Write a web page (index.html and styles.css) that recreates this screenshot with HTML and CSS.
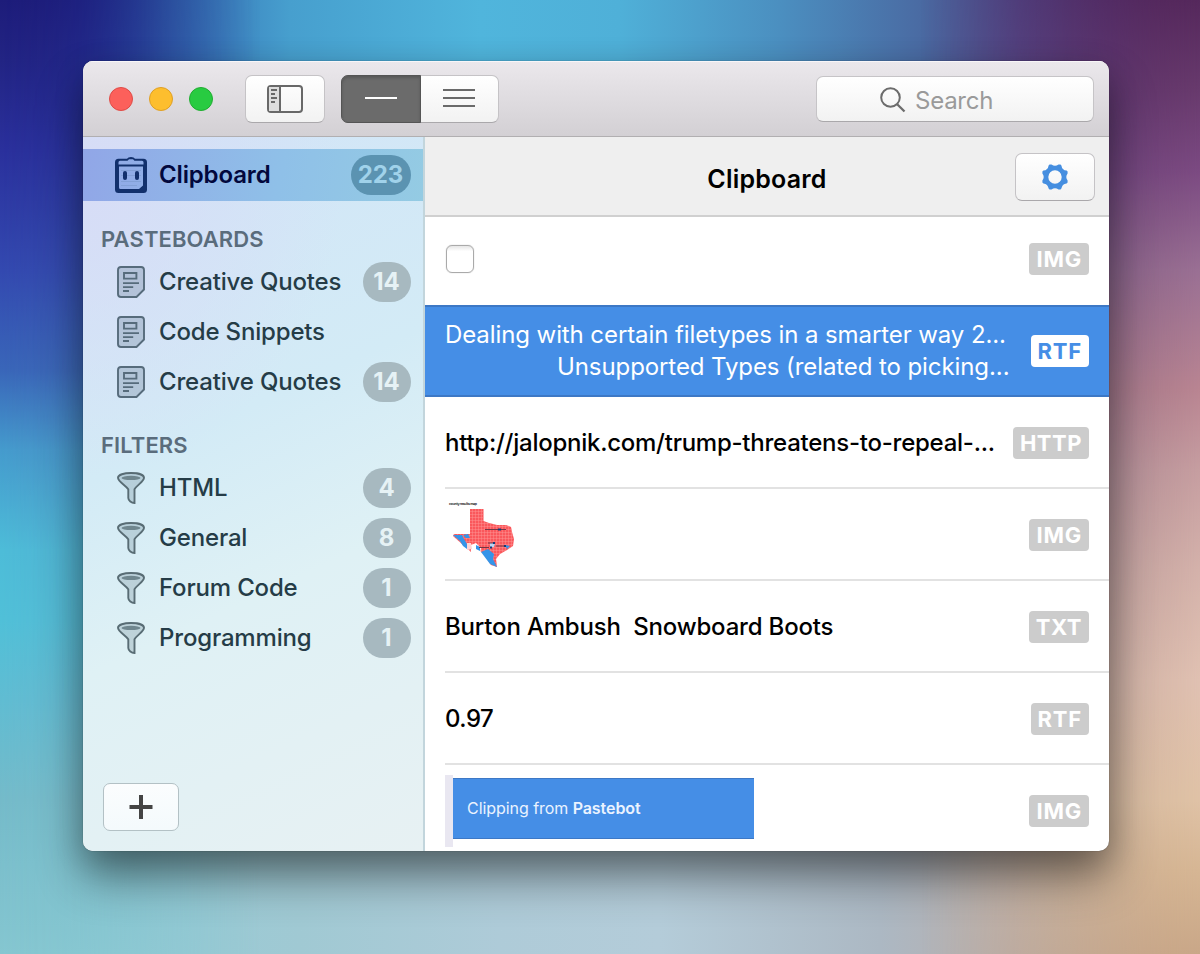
FILE: index.html
```html
<!DOCTYPE html>
<html lang="en">
<head>
<meta charset="utf-8">
<title>Clipboard</title>
<link rel="stylesheet" href="styles.css">
</head>
<body>
<svg class="defs" width="0" height="0" aria-hidden="true">
  <symbol id="note" viewBox="0 0 28 32">
    <path d="M4 1H24Q27 1 27 4V23.5L19.5 31H4Q1 31 1 28V4Q1 1 4 1Z" fill="#4f667f" fill-opacity=".25" stroke="#566b7b" stroke-width="1.9"/>
    <path d="M7 7H19.4V12.6H7Z" fill="none" stroke="#566b7b" stroke-width="1.9"/>
    <path d="M6 17.1H22M6 21.1H16.200M6 25H12" fill="none" stroke="#566b7b" stroke-width="1.9"/>
  </symbol>
  <symbol id="funnel" viewBox="0 0 28 32">
    <path d="M14 1C21 1 27 2.700 27 5.800C27 9.500 20 13 17.500 17.300V31C14.500 31 11.300 28.500 11.300 26V17.300C8 13 1 9.500 1 5.800C1 2.700 7 1 14 1Z" fill="#4f6a75" fill-opacity=".22" stroke="#586c74" stroke-width="1.9"/>
    <ellipse cx="14" cy="5.900" rx="9.500" ry="2.100" fill="#6f868e"/>
  </symbol>
</svg>
<div class="wallpaper"><i class="lower"></i><i class="left"></i><i class="right"></i></div>
<main class="window">
  <header class="toolbar">
    <div class="lights"><i class="red"></i><i class="yellow"></i><i class="green"></i></div>
    <button class="btn sidebar-toggle">
      <svg width="36" height="28" viewBox="0 0 36 28"><rect x="1" y="1" width="34" height="26" rx="3" fill="none" stroke="#686868" stroke-width="2"/><path d="M2 2H12V26H2Z" fill="#ddd"/><path d="M13 1V27" stroke="#686868" stroke-width="2"/><path d="M4 5H10M4 9H8M4 13H10M4 17H8" stroke="#686868" stroke-width="1.8"/></svg>
    </button>
    <div class="segmented">
      <span class="segment active"><svg width="32" height="20" viewBox="0 0 32 20"><path d="M0 9H32" stroke="#fff" stroke-width="2"/></svg></span>
      <span class="segment"><svg width="32" height="20" viewBox="0 0 32 20"><path d="M0 1H32M0 9H32M0 17H32" stroke="#6a6a6a" stroke-width="2"/></svg></span>
    </div>
    <div class="search">
      <svg width="26" height="26" viewBox="0 0 26 26"><circle cx="10.500" cy="10.500" r="9.300" fill="none" stroke="#6c6c6c" stroke-width="2"/><path d="M17.200 17.200L24.500 24.500" stroke="#6c6c6c" stroke-width="2.300"/></svg>
      <span>Search</span>
    </div>
  </header>
  <div class="body">
    <aside class="sidebar">
      <div class="item selected">
        <svg width="32" height="36" viewBox="0 0 32 36"><path fill="#12306c" fill-rule="evenodd" d="M3.500 1.800H12Q13 0 16 0Q19 0 20 1.800H28.500Q32 1.800 32 5.300V32.500Q32 36 28.500 36H3.500Q0 36 0 32.500V5.300Q0 1.800 3.500 1.800ZM5 3.800Q3.500 3.800 3.500 5.300V7.500H28.500V5.300Q28.500 3.800 27 3.800H19.500L18 2.300H14L12.500 3.800ZM4 9.500V30.500Q4 32 5.500 32H24L28 28.500V9.500Z"/><path d="M6 13.500H26M6 18.500H26M6 24.500H26M6 28.500H22" stroke="#7c9bd0" stroke-width=".7"/><rect x="8" y="14" width="4" height="9" rx="2" fill="#12306c"/><rect x="20" y="14" width="4" height="9" rx="2" fill="#12306c"/></svg>
        <span class="label">Clipboard</span><b class="count wide">223</b>
      </div>
      <h2 class="pasteboards">PASTEBOARDS</h2>
      <div class="item"><svg class="icon"><use href="#note"/></svg><span class="label">Creative Quotes</span><b class="count">14</b></div>
      <div class="item"><svg class="icon"><use href="#note"/></svg><span class="label">Code Snippets</span></div>
      <div class="item"><svg class="icon"><use href="#note"/></svg><span class="label">Creative Quotes</span><b class="count">14</b></div>
      <h2 class="filters">FILTERS</h2>
      <div class="item"><svg class="icon"><use href="#funnel"/></svg><span class="label">HTML</span><b class="count">4</b></div>
      <div class="item"><svg class="icon"><use href="#funnel"/></svg><span class="label">General</span><b class="count">8</b></div>
      <div class="item"><svg class="icon"><use href="#funnel"/></svg><span class="label">Forum Code</span><b class="count">1</b></div>
      <div class="item"><svg class="icon"><use href="#funnel"/></svg><span class="label">Programming</span><b class="count">1</b></div>
      <button class="btn add"><svg width="24" height="24" viewBox="0 0 24 24"><path d="M12 0V24M.5 12H23.500" stroke="#444" stroke-width="4"/></svg></button>
    </aside>
    <section class="content">
      <div class="heading">
        <h1>Clipboard</h1>
        <button class="btn gear"><svg width="26" height="26" viewBox="-13 -13 26 26"><path fill="#458ee0" fill-rule="evenodd" d="M-5.500 -12.600L-3.500 -12.600Q0 -10 3.500 -12.600L5.500 -12.600L6.400 -11.600Q7 -7 11.600 -6.400L12.600 -5.500V-3.500Q10 0 12.600 3.500V5.500L11.600 6.400Q7 7 6.400 11.600L5.500 12.600H3.500Q0 10 -3.500 12.600H-5.500L-6.400 11.600Q-7 7 -11.600 6.400L-12.600 5.500V3.500Q-10 0 -12.600 -3.500V-5.500L-11.600 -6.400Q-7 -7 -6.400 -11.600ZM0 -6.700A6.700 6.700 0 1 0 0 6.700A6.700 6.700 0 1 0 0 -6.700Z"/></svg></button>
      </div>
      <div class="row first"><i class="checkbox"></i><b class="tag">IMG</b></div>
      <div class="row current"><div class="lines"><p class="line-one">Dealing with certain filetypes in a smarter way 2...</p><p class="line-two">Unsupported Types (related to picking...</p></div><b class="tag">RTF</b></div>
      <div class="row"><p class="clip url">http://jalopnik.com/trump-threatens-to-repeal-...</p><b class="tag tight">HTTP</b></div>
      <div class="row">
        <svg class="map" width="74" height="76" viewBox="0 0 74 76">
          <defs><pattern id="grid" width="3" height="3" patternUnits="userSpaceOnUse"><path d="M0 0H3M0 0V3" stroke="#ff9a9a" stroke-width=".8"/></pattern></defs>
          <text class="map-title" x="4" y="9" textLength="28">county results map</text>
          <path d="M25 13H38.500V25L44 27L52 29L61 29L66 31L67 36L69 43L68 50L62 54L55 58L51 63L52 71L46 69L42 63L39 58L35 55L31 54L27 57L22 52L17 48L8 40L9 38H25Z" fill="#fa585c"/>
          <path d="M25 13H38.500V25L44 27L52 29L61 29L66 31L67 36L69 43L68 50L62 54L55 58L51 63L52 71L46 69L42 63L39 58L35 55L31 54L27 57L22 52L17 48L8 40L9 38H25Z" fill="url(#grid)"/>
          <path d="M26 49L31 47L36 52L35 58L26 58ZM8 43L17 49L14 50Z" fill="#fff"/>
          <path d="M8 39L17 39L19 43L22 48L22 53L18 50L15 45ZM36 56L43 53L49 58L48 63L52 71L45 68L39 60ZM31 49L35 51L35 55L31 53ZM60 49L65 50L62 53ZM18 39L23 38L25 42L21 42Z" fill="#3594e8"/>
          <path d="M22 47L26 47L27 53L22 54Z" fill="#ffd4d4"/><path d="M45 47L50 47L49 51L45 51Z" fill="#bad5f2"/>
          <path d="M40 33.500H61M43 47H48M34 51.500H44M51 50H59" stroke="#713746" stroke-width="1"/>
          <path d="M53 33.500H56M48 47H50M45 51.500H47M59 50H61" stroke="#123c7b" stroke-width="2"/>
        </svg><b class="tag">IMG</b>
      </div>
      <div class="row"><p class="clip burton">Burton Ambush&nbsp; Snowboard Boots</p><b class="tag tight">TXT</b></div>
      <div class="row"><p class="clip number">0.97</p><b class="tag">RTF</b></div>
      <div class="row last"><div class="preview"><div class="preview-card">Clipping from&nbsp;<b>Pastebot</b></div></div><b class="tag">IMG</b></div>
    </section>
  </div>
</main>
</body>
</html>
```
FILE: styles.css
```css
* { box-sizing: border-box; }
body {
  margin: 0;
  width: 1200px;
  height: 954px;
  overflow: hidden;
  padding: 61px 91px 103px 83px;
  font-family: Inter, sans-serif;
}
h1, h2, p { margin: 0; }
.defs { display: block; }
/* Wallpaper: edge colour ramps blended into each other */
.wallpaper {
  position: absolute;
  inset: 0;
  z-index: -1;
  background: linear-gradient(90deg, #1d1c7a, #22379a 80px, #3470b5 170px, #479fce 290px, #50b5dc 480px, #4fb0d8 620px, #4b8fc0 780px, #4a6ba3 920px, #4d4688 1020px, #4f3272 1110px, #55285c);
}
.wallpaper i { position: absolute; inset: 0; }
.wallpaper .lower {
  background: linear-gradient(90deg, #85c6d0, #93cbd6 100px, #a0c9d3 300px, #aecbd8 500px, #b4ccd9 660px, #acb8c3 880px, #b8aeac 1010px, #c9a788);
  mask-image: linear-gradient(transparent 10%, #000 85%);
}
.wallpaper .left {
  background: linear-gradient(#1d1c7a, #222484 60px, #2a309c 150px, #3349b0 270px, #3966b9 370px, #459bcd 450px, #4dbcd8 550px, #50c0d8 620px, #60bcd2 700px, #74bac9 800px, #85c6d0);
  mask-image: linear-gradient(90deg, #000, rgba(0,0,0,.8) 80px, transparent 260px);
}
.wallpaper .right {
  background: linear-gradient(#55285c, #683a6d 90px, #7b4a82 170px, #9a7094 270px, #b98592 390px, #c69ea1 470px, #d4b2ab 570px, #e0c1b2 680px, #dfc2a6 800px, #d6b694 870px, #c9a788);
  mask-image: linear-gradient(270deg, #000, rgba(0,0,0,.65) 80px, transparent 280px);
}
.window {
  height: 790px;
  border-radius: 10px;
  overflow: hidden;
  display: flex;
  flex-direction: column;
  background: #fff;
  box-shadow: 0 0 1px rgba(0,0,0,.65), 0 26px 46px rgba(0,0,0,.45), 0 8px 30px rgba(0,0,0,.15);
}
.toolbar {
  height: 76px;
  flex: none;
  display: flex;
  align-items: flex-start;
  padding: 14px 15px 0 26px;
  background: linear-gradient(#ebe8ec, #d3d0d4);
  border-bottom: 1.500px solid #b1afb1;
  box-shadow: inset 0 1px #f8f6f8;
}
.lights { display: flex; gap: 16px; padding-top: 12px; width: 136px; }
.lights i { width: 24px; height: 24px; border-radius: 50%; border: 1px solid; }
.lights .red { background: #fc605b; border-color: #df4b47; }
.lights .yellow { background: #fdbe2e; border-color: #df9f25; }
.lights .green { background: #28cb41; border-color: #20ad31; }
.btn {
  display: flex;
  align-items: center;
  justify-content: center;
  width: 80px;
  height: 48px;
  padding: 0;
  border: 1px solid #c5c3c6;
  border-bottom-color: #aaa8ab;
  border-radius: 7px;
  background: linear-gradient(#fff, #f2f2f2);
}
.segmented { display: flex; margin-left: 16px; width: 158px; height: 48px; border-radius: 7px; border: 1px solid #c5c3c6; border-bottom-color: #aaa8ab; background: linear-gradient(#fff, #f2f2f2); }
.segment { flex: 1; display: flex; align-items: center; justify-content: center; }
.segment:last-child { padding-right: 1px; }
.segment.active { flex: 0 0 80px; margin: -1px 0 -1px -1px; background: #6b6b6b; border: 1px solid #555; border-radius: 7px 0 0 7px; box-shadow: inset 0 2px 3px #585858; }
.search { display: flex; align-items: center; margin: 1px 0 0 auto; padding: 2px 0 0 63px; width: 278px; height: 46px; border: 1px solid #c6c4c7; border-bottom-color: #aaa8ab; border-radius: 7px; background: linear-gradient(#fff, #f2f2f2); font-size: 24px; color: #9a9a9a; }
.search span { margin-left: 9px; letter-spacing: -.25px; }
.body { flex: 1; min-height: 0; display: flex; }
.sidebar {
  width: 342px;
  flex: none;
  display: flex;
  flex-direction: column;
  padding-top: 12px;
  border-right: 2px solid #c2d5dc;
  background:
    radial-gradient(ellipse 260px 300px at 0 40px, #d7dcf6, transparent),
    linear-gradient(155deg, #d2e4f7 0, #d3ebf6 40%, #dff1f5 62%, #e7f1f3);
}
.item { display: flex; align-items: center; height: 50px; flex: none; padding: 0 12px 0 34px; color: #253c47; }
.item .icon { width: 28px; height: 32px; }
.item .label { margin: 0 0 2px 14px; font-size: 24px; font-weight: 450; letter-spacing: -.17px; }
.item.selected { height: 52px; padding-left: 32px; background: linear-gradient(100deg, #91a6e7, #8fc0e8 58%, #94cbe3); color: #02083d; }
.item.selected .label { margin-left: 12px; font-weight: 600; letter-spacing: -.15px; }
.item.selected svg { margin-bottom: 1px; }
.count { margin-left: auto; width: 48px; height: 40px; padding: 0 1px 1px 0; border-radius: 20px; background: #a7b9c0; color: #e6f2f5; display: flex; align-items: center; justify-content: center; font-size: 24px; font-weight: 700; }
.count.wide { width: 60px; background: #5b93b1; color: #a0d2ea; }
h2 { padding-left: 18px; height: 36px; line-height: 36px; font-size: 22px; font-weight: 600; letter-spacing: .12px; color: #5a6c7c; }
.pasteboards { margin-top: 20px; }
.filters { margin-top: 20px; }
.add { margin: auto 0 20px 20px; width: 76px; border-color: #b3c1c5; background: linear-gradient(#fbfdfe, #f4fafc); }
.content { flex: 1; min-width: 0; }
.heading { height: 80px; display: grid; grid-template-columns: 1fr auto 1fr; align-items: center; padding: 0 14px; background: #efefef; border-bottom: 2px solid #d0d0d0; }
h1 { grid-column: 2; padding-top: 5px; font-size: 25px; font-weight: 600; letter-spacing: .2px; }
.gear { justify-self: end; margin-top: 1px; }
.row { height: 92px; display: flex; align-items: center; justify-content: space-between; margin-left: 20px; padding-right: 20px; border-bottom: 2px solid #e2e2e2; color: #000; font-size: 24px; font-weight: 450; }
.row.first { height: 88px; border: 0; padding-bottom: 4px; }
.row.current { margin-left: 0; padding-left: 20px; border-top: 2px solid #3d78c5; border-bottom: 2px solid #3d78c5; background: #458ee6; color: #fff; font-weight: 400; }
.row.last { border: 0; height: 90px; }
.row p { white-space: pre; }
.lines p { line-height: 32px; letter-spacing: -.09px; }
.lines .line-two { padding-left: 112px; }
.url { letter-spacing: -.25px; }
.burton { letter-spacing: -.18px; }
.number { letter-spacing: -.5px; }
.tag { height: 32px; margin-top: 2px; padding: 0 7px; border-radius: 4px; background: #ccc; color: #fff; font-size: 22px; line-height: 32px; font-weight: 700; letter-spacing: .8px; }
.tag.tight { letter-spacing: .5px; }
.first .tag, .current .tag { margin-top: 0; }
.current .tag { background: #fff; color: #458ee6; }
.checkbox { width: 28px; height: 28px; margin-left: 1px; border: 1.500px solid #aaa; border-radius: 6px; background: linear-gradient(#e6e6e6, #fff 20%); box-shadow: 0 0 1px #aaa; }
.map-title { font-family: Inter, sans-serif; font-size: 3.500px; font-weight: 700; fill: #333; }
.preview { width: 309px; height: 72px; margin-top: 2px; padding-top: 3px; border-left: 8px solid #e9e7f1; }
.preview-card { height: 61px; display: flex; align-items: center; padding: 0 0 2px 14px; background: #458ee6; color: #eaf3ff; border-top: 1px solid #3d78c5; border-bottom: 1px solid #3d78c5; font-size: 16px; font-weight: 400; letter-spacing: -.06px; }
.preview-card b { font-weight: 600; }
```
